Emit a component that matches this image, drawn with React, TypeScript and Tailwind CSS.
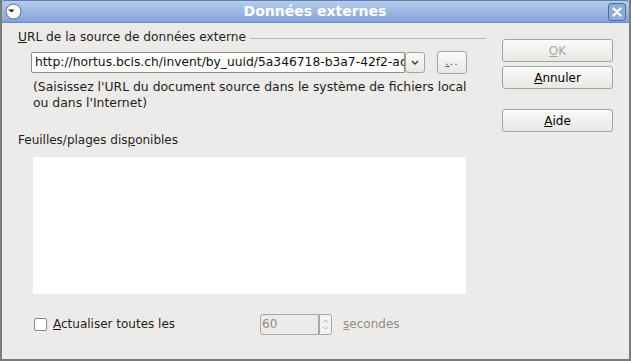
import React from "react";

const Btn = ({ children, disabled = false, className = "" }: { children: React.ReactNode; disabled?: boolean; className?: string }) => (
  <div
    className={`flex items-center justify-center rounded-[3px] border border-[#a5a39f] bg-gradient-to-b from-[#fbfbfa] to-[#e9e7e4] text-[12px] ${
      disabled ? "text-[#a9a7a3]" : "text-black"
    } ${className}`}
  >
    {children}
  </div>
);

export default function App() {
  return (
    <div
      className="w-[631px] h-[361px] flex flex-col bg-[#edebe9] border-x-2 border-b-2 border-[#7b7b7b] overflow-hidden"
      style={{ fontFamily: '"DejaVu Sans", sans-serif' }}
    >
      {/* title bar */}
      <div className="h-[23px] -mx-[2px] flex items-center justify-between px-[4px] rounded-t-[5px] bg-gradient-to-b from-[#b5cdec] to-[#82a3d7] border border-[#5f7fb3] border-b-[#6a89bd] shrink-0">
        <svg width="17" height="17" viewBox="0 0 17 17">
          <circle cx="8.5" cy="8.5" r="7.5" fill="#f7f7f7" stroke="#5c6a80" strokeWidth="1" />
          <path d="M3.5 7 L9 7 M5 8.2 L8 8.2" stroke="#222" strokeWidth="1.2" />
        </svg>
        <div className="text-white font-bold text-[14px]">Données externes</div>
        <div className="w-[18px] h-[18px] rounded-[3px] border border-[#4f6d9f] bg-[#8eaddb] flex items-center justify-center">
          <svg width="10" height="10" viewBox="0 0 10 10">
            <path d="M1.5 1.5 L8.5 8.5 M8.5 1.5 L1.5 8.5" stroke="#fff" strokeWidth="2.4" strokeLinecap="round" />
          </svg>
        </div>
      </div>

      <div className="flex flex-1 text-[12px] text-[#1e1e1e]">
        {/* left column */}
        <div className="w-[484px] pl-[16px] flex flex-col">
          <div className="flex items-center mt-[6px] h-[16px]">
            <span className="text-[12.2px]">
              <u>U</u>RL de la source de données externe
            </span>
            <div className="flex-1 h-px bg-[#b9b7b3] ml-[4px] mt-[2px]" />
          </div>

          <div className="flex items-center ml-[13px] mt-[6px] h-[23px]">
            <div className="w-[374px] h-[21px] border border-[#8f8d89] rounded-l-[2px] bg-white flex items-center pl-[3px] overflow-hidden whitespace-nowrap text-[#111] text-[12.3px]">
              http://hortus.bcis.ch/invent/by_uuid/5a346718-b3a7-42f2-ac
            </div>
            <div className="w-[20px] h-[21px] border border-[#a5a39f] rounded-[3px] bg-gradient-to-b from-[#fbfbfa] to-[#e9e7e4] flex items-center justify-center">
              <svg width="8" height="5" viewBox="0 0 8 5">
                <path d="M1 1 L4 4 L7 1" stroke="#333" strokeWidth="1.3" fill="none" />
              </svg>
            </div>
            <Btn className="w-[30px] h-[23px] ml-[12px]">
              <span className="tracking-[1px] text-[11px] text-[#555]">
                <u>.</u>..
              </span>
            </Btn>
          </div>

          <div className="ml-[15px] mt-[5px] leading-[16px] text-[12.4px] whitespace-nowrap">
            (Saisissez l'URL du document source dans le système de fichiers local
            <br />
            ou dans l'Internet)
          </div>

          <div className="mt-[21px] leading-[16px]">
            Feuilles/plages dis<u>p</u>onibles
          </div>

          <div className="ml-[15px] mt-[9px] w-[433px] h-[137px] bg-white" />

          <div className="flex items-center mt-[20px] h-[20px]">
            <div className="ml-[16px] w-[13px] h-[13px] border border-[#8a8884] rounded-[2px] bg-white" />
            <span className="ml-[6px]">
              <u>A</u>ctualiser toutes les
            </span>
            <div className="ml-[85px] flex items-center">
              <div className="w-[59px] h-[21px] border border-[#a9a7a3] rounded-l-[3px] flex items-center pl-[1px] text-[#8e8c88]">
                60
              </div>
              <div className="w-[13px] h-[21px] border border-[#a9a7a3] rounded-r-[3px] bg-[#f4f3f2] flex flex-col items-center justify-center gap-[3px]">
                <svg width="7" height="4" viewBox="0 0 7 4">
                  <path d="M1 3.5 L3.5 1 L6 3.5" stroke="#b0aeaa" strokeWidth="1" fill="none" />
                </svg>
                <svg width="7" height="4" viewBox="0 0 7 4">
                  <path d="M1 0.5 L3.5 3 L6 0.5" stroke="#b0aeaa" strokeWidth="1" fill="none" />
                </svg>
              </div>
              <span className="ml-[11px] text-[#8e8c88]">
                <u>s</u>econdes
              </span>
            </div>
          </div>
        </div>

        {/* right column */}
        <div className="flex flex-col ml-[16px] mt-[16px]">
          <Btn disabled className="w-[111px] h-[23px]">
            <span>
              <u>O</u>K
            </span>
          </Btn>
          <Btn className="w-[111px] h-[23px] mt-[4px]">
            <span>
              <u>A</u>nnuler
            </span>
          </Btn>
          <Btn className="w-[111px] h-[23px] mt-[20px]">
            <span>
              <u>A</u>ide
            </span>
          </Btn>
        </div>
      </div>
    </div>
  );
}
